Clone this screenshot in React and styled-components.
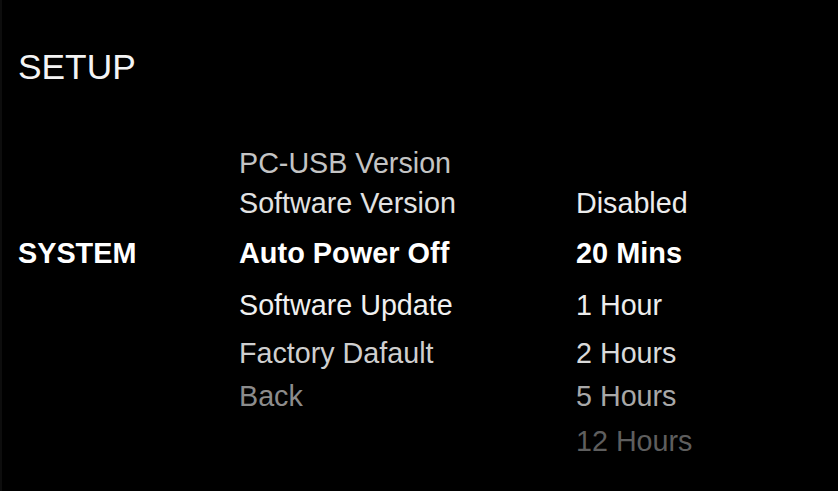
import React from 'react'
import styled, { createGlobalStyle } from 'styled-components'

// GLOBAL
const GlobalStyle = createGlobalStyle`
	html, body {
		margin: 0;
		padding: 0;
		background: #000;
	}
	body {
		font-family: "Liberation Sans", Arial, sans-serif;
	}
`

// STYLES
const Screen = styled.div`
	width: 838px;
	height: 491px;
	box-sizing: border-box;
	background: #000;
	border-left: 2px solid #0d0d0d;
	padding: 47px 0 0 16px;
	overflow: hidden;
`

const Title = styled.h1`
	margin: 0;
	font-size: 35.3px;
	line-height: 40px;
	font-weight: normal;
	color: #f4f4f4;
`

const Menu = styled.div`
	display: grid;
	grid-template-columns: 221px 337px 1fr;
	grid-template-rows: 40px 40px 60px 45px 50px 37px 52px;
	margin-top: 56px;
`

const Section = styled.div`
	grid-column: 1;
	grid-row: ${p => p.row};
	display: flex;
	align-items: center;
	font-size: 28.8px;
	font-weight: bold;
	color: #fff;
`

const Cell = styled.div`
	grid-column: ${p => p.col};
	grid-row: ${p => p.row};
	display: flex;
	align-items: center;
	font-size: ${p => (p.active ? '28.9px' : '28.7px')};
	font-weight: ${p => (p.active ? 'bold' : 'normal')};
	color: ${p => p.color};
	white-space: nowrap;
`

// DATA
const items = [
	{ text: 'PC-USB Version', color: '#c4c4c4' },
	{ text: 'Software Version', color: '#e2e2e2' },
	{ text: 'Auto Power Off', color: '#ffffff', active: true },
	{ text: 'Software Update', color: '#f0f0f0' },
	{ text: 'Factory Dafault', color: '#cfcfcf' },
	{ text: 'Back', color: '#8c8c8c' },
]

const values = [
	{ text: 'Disabled', color: '#ececec' },
	{ text: '20 Mins', color: '#ffffff', active: true },
	{ text: '1 Hour', color: '#ededed' },
	{ text: '2 Hours', color: '#dadada' },
	{ text: '5 Hours', color: '#a8a8a8' },
	{ text: '12 Hours', color: '#5e5e5e' },
]

const App = () => (
	<>
		<GlobalStyle />
		<Screen>
			<Title>SETUP</Title>
			<Menu>
				<Section row={3}>SYSTEM</Section>
				{items.map((item, i) => (
					<Cell key={item.text} col={2} row={i + 1} color={item.color} active={item.active}>
						{item.text}
					</Cell>
				))}
				{values.map((item, i) => (
					<Cell key={item.text} col={3} row={i + 2} color={item.color} active={item.active}>
						{item.text}
					</Cell>
				))}
			</Menu>
		</Screen>
	</>
)

export default App
